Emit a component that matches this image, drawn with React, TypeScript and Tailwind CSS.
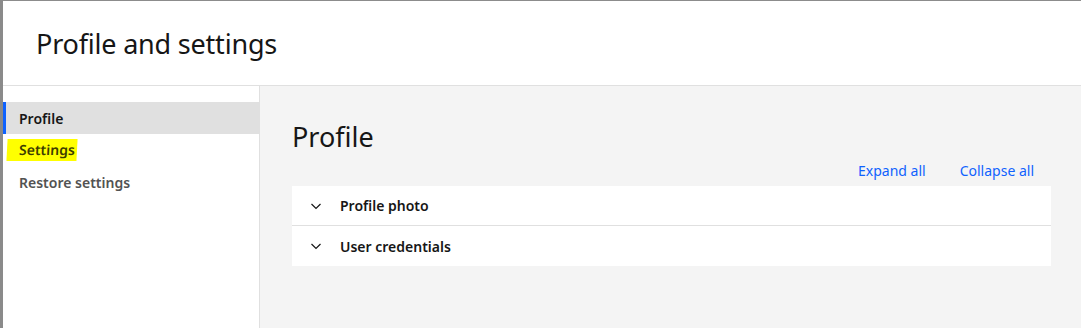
import React from "react";

function Chevron() {
  return (
    <svg width="16" height="16" viewBox="0 0 16 16" className="text-[#161616]">
      <path d="M3.5 6 L8 10.5 L12.5 6" fill="none" stroke="currentColor" strokeWidth="1.2" />
    </svg>
  );
}

export default function App() {
  const font = { fontFamily: '"Noto Sans", "Open Sans", sans-serif' };
  return (
    <div className="flex h-[328px] w-[1081px] overflow-hidden bg-white" style={font}>
      <div className="w-[3px] shrink-0 bg-[#8a8a8a]" />
      <div className="flex min-w-0 flex-1 flex-col border-t border-[#8c8c8c]">
        <header className="flex h-[85px] shrink-0 items-center border-b border-[#e0e0e0] bg-white pl-[33px]">
          <h1 className="text-[27px] font-normal leading-none text-[#161616] tracking-[-0.2px]">Profile and settings</h1>
        </header>
        <div className="flex flex-1">
          <nav className="w-[257px] shrink-0 border-r border-[#e0e0e0] bg-white pt-[16px]">
            <div className="flex h-[32px] items-center border-l-[3px] border-[#0f62fe] bg-[#e0e0e0] pl-[13px] text-[14px] font-semibold text-[#161616]">
              Profile
            </div>
            <div className="flex h-[32px] items-center pl-[4px] text-[14px] font-semibold text-[#525252]">
              <span className="bg-[#ffff00] pl-[12px] pr-[2px] pb-[1px] text-[#3d3d00] -skew-x-3">Settings</span>
            </div>
            <div className="flex h-[32px] items-center pl-[16px] text-[14px] font-semibold text-[#525252]">
              Restore settings
            </div>
          </nav>
          <main className="flex-1 bg-[#f4f4f4] pl-[32px] pr-[30px] pt-[37px]">
            <h2 className="text-[27px] font-normal leading-none text-[#161616]">Profile</h2>
            <div className="mt-[10px] flex justify-end gap-[34px] pr-[17px] text-[14px] text-[#0f62fe]">
              <span>Expand all</span>
              <span>Collapse all</span>
            </div>
            <div className="mt-[5px] bg-white">
              <div className="flex h-[40px] items-center border-b border-[#e0e0e0] pl-[16px] gap-[16px]">
                <Chevron />
                <span className="text-[14px] font-semibold text-[#161616]">Profile photo</span>
              </div>
              <div className="flex h-[40px] items-center pl-[16px] gap-[16px]">
                <Chevron />
                <span className="text-[14px] font-semibold text-[#161616]">User credentials</span>
              </div>
            </div>
          </main>
        </div>
      </div>
    </div>
  );
}
